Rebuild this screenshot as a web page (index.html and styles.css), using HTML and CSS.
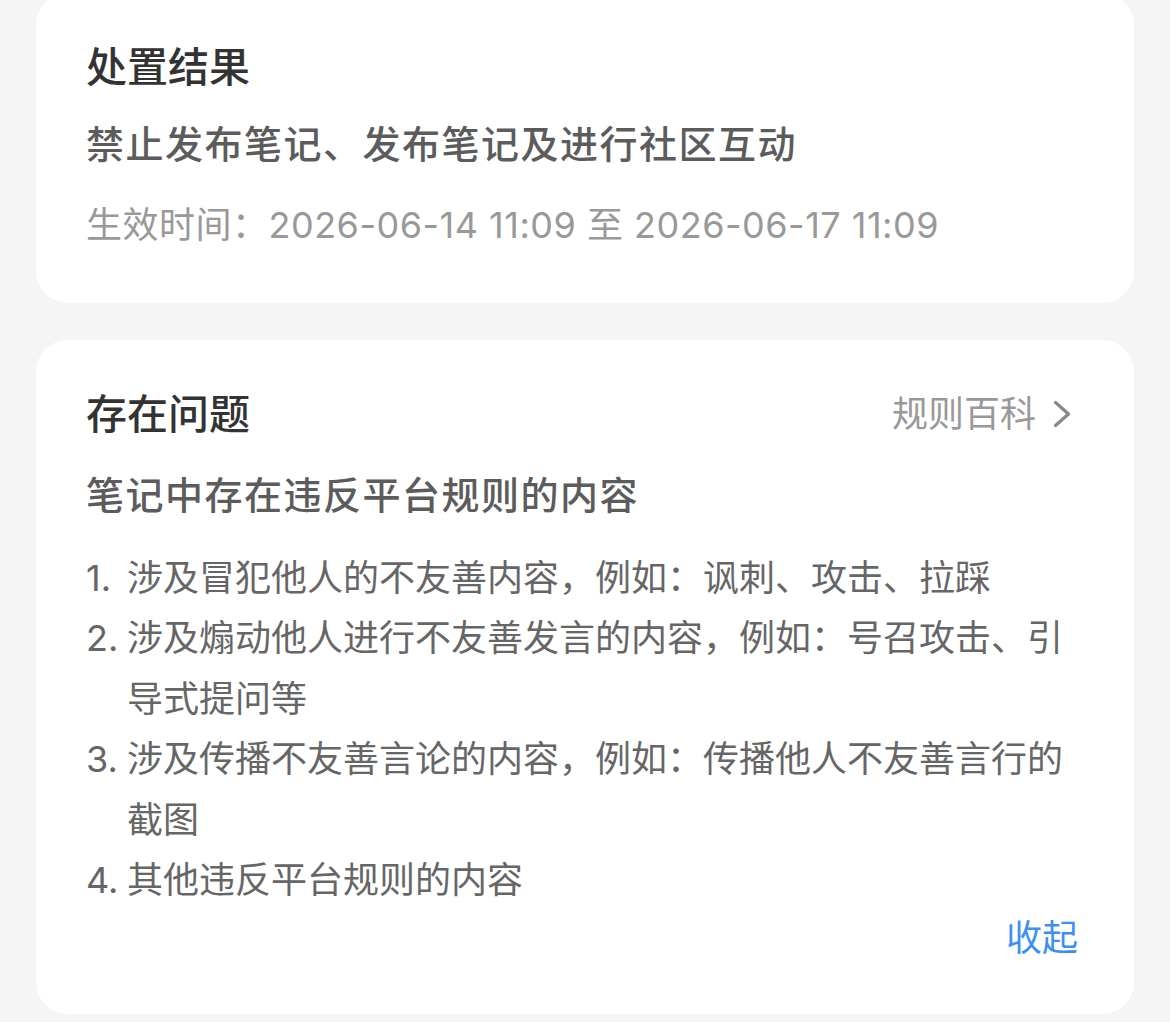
FILE: index.html
```html
<!DOCTYPE html>
<html lang="zh-CN">
<head>
    <meta charset="UTF-8">
    <meta name="viewport" content="width=device-width, initial-scale=1.0">
    <title>违规详情</title>
    <link rel="stylesheet" href="styles.css">
</head>
<body>

<div class="page">
    <section class="card card-result">
        <h2 class="card-title">处置结果</h2>
        <p class="card-sub">禁止发布笔记、发布笔记及进行社区互动</p>
        <p class="effect-time">生效时间：2026-06-14 11:09 至 2026-06-17 11:09</p>
    </section>

    <section class="card card-issue">
        <div class="card-head">
            <h2 class="card-title">存在问题</h2>
            <a class="rule-link" href="#">
                规则百科
                <svg class="chevron" width="20" height="28" viewBox="0 0 20 28">
                    <polyline points="3.5,2.5 16.5,14 3.5,25.5" fill="none" stroke="#888" stroke-width="3.2" stroke-linecap="round" stroke-linejoin="round"/>
                </svg>
            </a>
        </div>
        <p class="card-sub">笔记中存在违反平台规则的内容</p>
        <ol class="issue-list">
            <li><span class="num">1.</span><span>涉及冒犯他人的不友善内容，例如：讽刺、攻击、拉踩</span></li>
            <li><span class="num">2.</span><span>涉及煽动他人进行不友善发言的内容，例如：号召攻击、引导式提问等</span></li>
            <li><span class="num">3.</span><span>涉及传播不友善言论的内容，例如：传播他人不友善言行的截图</span></li>
            <li><span class="num">4.</span><span>其他违反平台规则的内容</span></li>
        </ol>
        <div class="card-foot">
            <button class="collapse-btn">收起</button>
        </div>
    </section>
</div>

</body>
</html>
```

FILE: styles.css
```css
body {
    margin: 0;
    padding: 0;
    background-color: #f5f5f5;
    font-family: Inter, "Noto Sans CJK SC", sans-serif;
    color: #333;
}

.page {
    margin-top: -7px; /* list is scrolled a little */
    padding: 0 36px 10px;
    display: flex;
    flex-direction: column;
    gap: 37px;
}

.card {
    background: #fff;
    border-radius: 32px;
    padding: 46px 50px 50px;
}

.card-title {
    margin: 0;
    font-size: 41px;
    line-height: 56px;
    font-weight: 500;
    color: #333;
}

.card-sub {
    margin: 21px 0 0;
    font-size: 38px;
    letter-spacing: 1.5px;
    line-height: 56px;
    font-weight: 500;
    color: #5c5c5c;
}

.effect-time {
    margin: 25px 0 0;
    font-size: 36px;
    letter-spacing: 0.5px;
    line-height: 56px;
    color: #999;
}

.card-issue {
    padding-bottom: 48px;
}

.card-issue .card-sub {
    margin-top: 25px;
}

.card-head {
    display: flex;
    align-items: center;
    justify-content: space-between;
}

.rule-link {
    display: flex;
    align-items: center;
    gap: 16px;
    font-size: 36px;
    line-height: 56px;
    color: #999;
    text-decoration: none;
    margin-right: 12px;
}

.issue-list {
    list-style: none;
    margin: 25px 0 0;
    padding: 0;
    font-size: 36px;
    line-height: 60.4px;
    color: #666;
}

.issue-list li {
    display: flex;
}

.issue-list .num {
    flex: 0 0 41px;
}

.card-foot {
    display: flex;
    justify-content: flex-end;
}

.collapse-btn {
    border: none;
    background: none;
    padding: 0 6px 0 0;
    font-family: inherit;
    font-size: 36px;
    line-height: 56px;
    color: #3d8ef5;
}
```
